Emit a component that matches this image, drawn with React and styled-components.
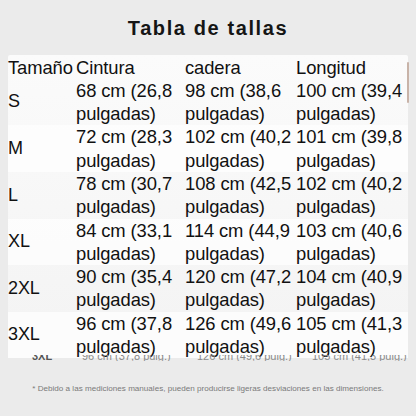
import React from 'react';
import styled, { createGlobalStyle } from 'styled-components';

const GlobalStyle = createGlobalStyle`
  html, body {
    margin: 0;
    padding: 0;
    background: #ebebeb;
  }
  body {
    font-family: "Liberation Sans", Arial, sans-serif;
  }
`;

const Page = styled.div`
  width: 416px;
  height: 416px;
  background: #ebebeb;
  overflow: hidden;
  display: flex;
  flex-direction: column;
`;

const Title = styled.h1`
  margin: 16px 0 0;
  font-size: 20px;
  line-height: 24px;
  font-weight: 700;
  letter-spacing: 1.6px;
  text-align: center;
  color: #151515;
`;

const Table = styled.div`
  position: relative;
  z-index: 1;
  margin: 15px 8px 0;
  width: 400px;
  padding-top: 0.5px;
  background: linear-gradient(#fbfbfb, #f3f3f3);
  border-radius: 2px 2px 0 0;
  color: #111;
  font-size: 18.4px;
  line-height: 23.3px;
`;

const Row = styled.div`
  display: grid;
  grid-template-columns: 68px 109px 111px 112px;
  align-items: center;
  background: ${p => (p.$stripe ? 'rgba(255,255,255,0.7)' : 'transparent')};
`;

const Cell = styled.div`
  white-space: nowrap;
  letter-spacing: -0.1px;
`;

const SizeCell = styled(Cell)`
  font-size: 18px;
`;

const ScrollThumb = styled.div`
  position: absolute;
  right: -1px;
  top: 7px;
  width: 2px;
  height: 41px;
  background: #c8b3a8;
  border-radius: 1px;
`;

const Ghost = styled.div`
  position: relative;
  z-index: 2;
  height: 6px;
  overflow: hidden;
  margin: -3px 8px 0;
`;

const GhostRow = styled.div`
  display: grid;
  grid-template-columns: 74px 115px 115px 96px;
  margin-top: -5px;
  font-size: 11px;
  line-height: 12px;
  color: #8a8a8a;
  white-space: nowrap;
  & > span:first-child {
    padding-left: 24px;
    font-weight: 700;
    color: #555;
  }
`;

const Note = styled.p`
  margin: 23px 0 0;
  text-align: center;
  font-size: 8.1px;
  line-height: 10px;
  color: #7a7a7a;
`;

const rows = [
  ['S', '68 cm (26,8', '98 cm (38,6', '100 cm (39,4'],
  ['M', '72 cm (28,3', '102 cm (40,2', '101 cm (39,8'],
  ['L', '78 cm (30,7', '108 cm (42,5', '102 cm (40,2'],
  ['XL', '84 cm (33,1', '114 cm (44,9', '103 cm (40,6'],
  ['2XL', '90 cm (35,4', '120 cm (47,2', '104 cm (40,9'],
  ['3XL', '96 cm (37,8', '126 cm (49,6', '105 cm (41,3'],
];

export default function App() {
  return (
    <Page>
      <GlobalStyle />
      <Title>Tabla de tallas</Title>
      <Table>
        <ScrollThumb />
        <Row>
          <Cell>Tamaño</Cell>
          <Cell>Cintura</Cell>
          <Cell>cadera</Cell>
          <Cell>Longitud</Cell>
        </Row>
        {rows.map((r, i) => (
          <Row key={r[0]} $stripe={i % 2 === 1}>
            <SizeCell>{r[0]}</SizeCell>
            {r.slice(1).map(v => (
              <Cell key={v}>
                {v}
                <br />
                pulgadas)
              </Cell>
            ))}
          </Row>
        ))}
      </Table>
      <Ghost>
        <GhostRow>
          <span>3XL</span>
          <span>96 cm (37,8 pulg.)</span>
          <span>126 cm (49,6 pulg.)</span>
          <span>105 cm (41,3 pulg.)</span>
        </GhostRow>
      </Ghost>
      <Note>* Debido a las mediciones manuales, pueden producirse ligeras desviaciones en las dimensiones.</Note>
    </Page>
  );
}
